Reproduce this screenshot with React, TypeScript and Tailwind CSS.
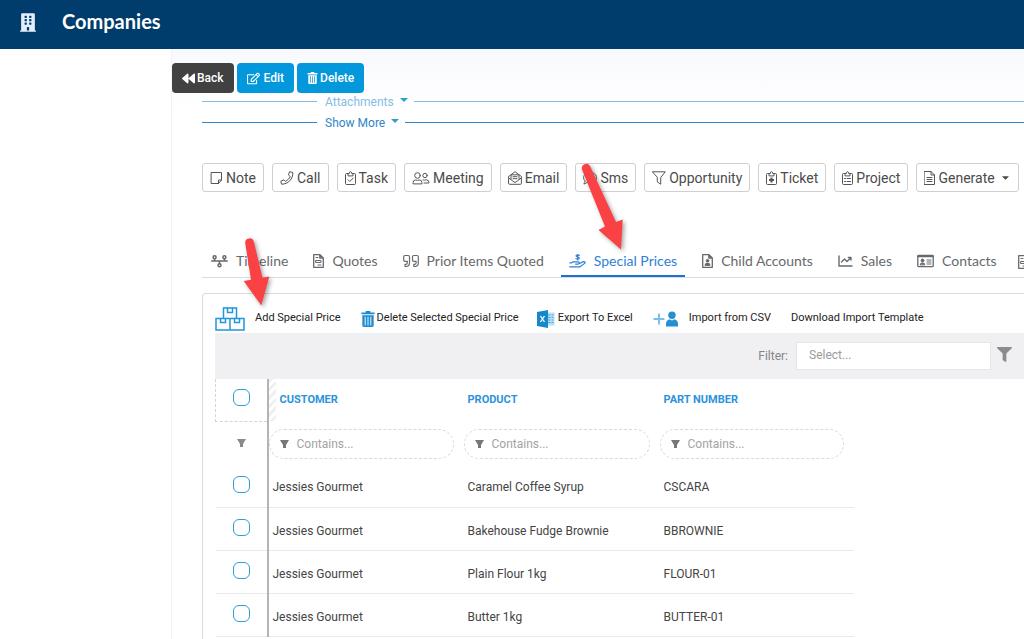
import React from 'react';
import { FaBackward, FaRegEdit, FaBuilding, FaFilter, FaCaretDown } from 'react-icons/fa';

// --- Icons ---

type IconProps = { children: React.ReactNode; className: string; viewBox: string };

const Line = ({ children, className, viewBox }: IconProps) => (
    <svg viewBox={viewBox} className={className} fill="none" stroke="currentColor" strokeWidth="1" strokeLinejoin="round" strokeLinecap="round" aria-hidden="true">
        {children}
    </svg>
);

const NoteIcon = () => (
    <Line viewBox="0 0 13 14" className="w-[13px] h-3.5">
        <path d="M1.5 1.5H11.5V9L8.5 12.5H1.5Z" />
        <path d="M11.5 9H8.5V12.5" />
    </Line>
);

const CallIcon = () => (
    <Line viewBox="0 0 14 14" className="w-3.5 h-3.5">
        <path d="M10 .8L12.8 1.5C13.2 8 8 13.3 1.5 13.2L.8 10.2L4 8.8L5.4 10.4C7.5 9.4 9.3 7.6 10.3 5.5L8.7 4.1Z" />
    </Line>
);

const Clipboard = ({ children }: { children: React.ReactNode }) => (
    <Line viewBox="0 0 11 14" className="w-[11px] h-3.5">
        <path d="M3 2.5H1.5Q.5 2.5 .5 3.5V12.5Q.5 13.5 1.5 13.5H9.5Q10.5 13.5 10.5 12.5V3.5Q10.5 2.5 9.5 2.5H8" />
        <path d="M3 4.5V2.5H4.3Q4.3 .7 5.5 .7T6.7 2.5H8V4.5Z" />
        {children}
    </Line>
);

const TaskIcon = () => (
    <Clipboard>
        <path d="M3 8.7L4.8 10.5L8.2 7" />
    </Clipboard>
);

const TicketIcon = () => (
    <Clipboard>
        <path d="M5.5 6.5V11.5M3 9H8" strokeWidth="2" strokeLinecap="butt" />
    </Clipboard>
);

const ProjectIcon = () => (
    <Clipboard>
        <path d="M2.5 7.5H3.5M5 7.5H8.5M2.5 10.5H3.5M5 10.5H8.5" />
    </Clipboard>
);

const MeetingIcon = () => (
    <Line viewBox="0 0 17 14" className="w-[18px] h-3.5">
        <circle cx="5" cy="4.5" r="2.8" />
        <circle cx="12.5" cy="4.5" r="2.2" />
        <path d="M.6 12.5V11.5Q.6 9 3 9Q5 9.8 7 9Q9.4 9 9.4 11.5V12.5Z" />
        <path d="M10.5 8.9Q12.5 9.5 13.8 8.8Q16.4 8.8 16.4 11.5V12H11.5" />
    </Line>
);

const EmailIcon = () => (
    <Line viewBox="0 0 14 14" className="w-3.5 h-3.5">
        <path d="M.6 5.5L7 .7L13.4 5.5V12.4Q13.4 13.3 12.4 13.3H1.6Q.6 13.3 .6 12.4Z" />
        <path d="M.8 7L6 11Q7 11.6 8 11L13.2 7M3 8.2V3.8H11V8.2M5 5.7H9M5 7.7H9" />
    </Line>
);

const SmsIcon = () => (
    <Line viewBox="0 0 14 14" className="w-3.5 h-3.5">
        <path d="M7 1.2C10.6 1.2 13.4 3.5 13.4 6.7S10.6 12 7 12Q5.4 12 4 11.4Q2.6 12.9 .8 13Q2.1 11.5 2.1 10Q.6 8.6 .6 6.7C.6 3.5 3.4 1.2 7 1.2Z" />
        <path d="M4.3 6.7H4.4M7 6.7H7.1M9.7 6.7H9.8" strokeWidth="1.5" />
    </Line>
);

const FunnelIcon = () => (
    <Line viewBox="0 0 14 14" className="w-3.5 h-3.5">
        <path d="M.7 .8H13.3L8.7 6.6V13.2L5.3 10.8V6.6Z" />
    </Line>
);

const FileIcon = () => (
    <Line viewBox="0 0 11 14" className="w-[11px] h-3.5">
        <path d="M.5 .5H7L10.5 4V13.5H.5ZM7 .5V4H10.5" />
        <path d="M3 6.5H8M3 8.5H8M3 10.5H8" />
    </Line>
);

const TimelineIcon = () => (
    <Line viewBox="0 0 17 14" className="w-[17px] h-3.5">
        <g strokeWidth="1.5">
            <circle cx="3.6" cy="3.2" r="1.5" />
            <circle cx="13.4" cy="3.2" r="1.5" />
            <circle cx="8.5" cy="11.2" r="1.5" />
            <path d="M.7 7H16.3M3.6 4.8V7M13.4 4.8V7M8.5 7V9.4" />
        </g>
    </Line>
);

const QuotesIcon = () => (
    <Line viewBox="0 0 11 14" className="w-[11px] h-3.5">
        <path d="M.7 .7H7L10.3 4V13.3H.7ZM6.8 .7V4H10.3" strokeWidth="1.3" />
        <path d="M3 3.5H5M3 6.5H8V8.5H3ZM5 11H8" />
    </Line>
);

const PriorIcon = () => (
    <Line viewBox="0 0 16 14" className="w-4 h-3.5">
        <g strokeWidth="1.2">
            <path d="M2 1.5H5.2Q6.5 1.5 6.5 2.8V9Q6.5 12.3 3 12.5H2V10.3H3Q4.3 10.2 4.3 8.8V7.3H2Q.7 7.3 .7 6V2.8Q.7 1.5 2 1.5Z" />
            <path d="M10.8 1.5H14Q15.3 1.5 15.3 2.8V9Q15.3 12.3 11.8 12.5H10.8V10.3H11.8Q13.1 10.2 13.1 8.8V7.3H10.8Q9.5 7.3 9.5 6V2.8Q9.5 1.5 10.8 1.5Z" />
        </g>
    </Line>
);

const PricesIcon = () => (
    <Line viewBox="0 0 17 14" className="w-[17px] h-3.5">
        <g strokeWidth="1.2">
            <path d="M10.3 1.4Q9.8 .8 8.6 .9Q7 1 7.1 2Q7.2 2.8 8.7 3Q10.4 3.3 10.3 4.3Q10.2 5.2 8.7 5.2Q7.4 5.2 6.9 4.6M8.7 .3V6" />
            <path d="M.8 8.8H2.6L4 7.8H9Q10.3 7.9 10.2 9Q10 10.1 8.8 10.1H6.6M9.9 9.7L14.5 7.6Q15.8 7.4 16.1 8.6Q16 9.4 11.3 12.5Q10.8 12.9 10 12.9H.8" />
        </g>
    </Line>
);

const ChildIcon = () => (
    <Line viewBox="0 0 11 14" className="w-[11px] h-3.5">
        <path d="M.7 .7H7L10.3 4V13.3H.7ZM6.8 .7V4H10.3" strokeWidth="1.3" />
        <circle cx="5.5" cy="6.7" r="1.3" fill="currentColor" />
        <path d="M3 11Q3 9 5.5 9T8 11Z" fill="currentColor" />
    </Line>
);

const SalesIcon = () => (
    <Line viewBox="0 0 15 14" className="w-[15px] h-3.5">
        <path d="M1 2V12H14" strokeWidth="1.4" />
        <path d="M3.5 8L6.5 5L9 7.5L12.5 4M10.3 3.5H13V6.2" strokeWidth="1.3" />
    </Line>
);

const ContactsIcon = () => (
    <Line viewBox="0 0 17 14" className="w-[17px] h-3.5">
        <rect x=".8" y="1.3" width="15.4" height="11.4" rx="1" strokeWidth="1.3" />
        <path d="M1 2.3H16" strokeWidth="2" />
        <circle cx="5.5" cy="6.5" r="1.4" fill="currentColor" />
        <path d="M3.2 10.5Q3.2 8.9 5.5 8.9T7.8 10.5Z" fill="currentColor" />
        <path d="M10 6H14M10 8H14M10 10H14" />
    </Line>
);

const BoxesIcon = () => (
    <Line viewBox="0 0 30 24" className="w-[30px] h-6 text-[#2196dc]">
        <g strokeWidth="1.5" strokeLinejoin="miter">
            <path d="M8.5 11.5V1H21.5V11.5M1 11.5H29V23H1ZM15 11.5V23" />
            <path d="M12.5 1V5.5H17.5V1M5.5 11.5V15.5H10.5V11.5M19.5 11.5V15.5H24.5V11.5" />
        </g>
    </Line>
);

const TrashIcon = ({ className }: { className: string }) => (
    <svg viewBox="0 0 14 17" className={className} fill="currentColor" aria-hidden="true">
        <path d="M4.5 0H9.5V1.5H14V3.5H0V1.5H4.5Z" />
        <path fillRule="evenodd" d="M1 4.5H13V15.5Q13 17 11.5 17H2.5Q1 17 1 15.5ZM3.5 6V15.5H4.5V6ZM6.5 6V15.5H7.5V6ZM9.5 6V15.5H10.5V6Z" />
    </svg>
);

const ExcelIcon = () => (
    <svg viewBox="0 0 18 18" className="w-[18px] h-[18px]" aria-hidden="true">
        <path d="M10 2.5H17.5V15.5H10Z" fill="#b8dff5" />
        <path d="M11 5H13.5M14.5 5H16.5M11 7.5H13.5M14.5 7.5H16.5M11 10H13.5M14.5 10H16.5M11 12.5H13.5M14.5 12.5H16.5" stroke="#4fabdf" strokeWidth="1.2" />
        <path d="M0 2L11 0V18L0 16Z" fill="#1787cb" />
        <path d="M3.5 6L7.5 12M7.5 6L3.5 12" stroke="#fff" strokeWidth="1.3" />
    </svg>
);

const ImportIcon = () => (
    <svg viewBox="0 0 26 16" className="w-[26px] h-4" aria-hidden="true">
        <path d="M6 2.5V13.5M.5 8H11.5" stroke="#7cbfe8" strokeWidth="2" />
        <circle cx="19" cy="4.2" r="3.7" fill="#2490d0" />
        <path d="M13 15.5V13Q13 9.2 16.5 8.3L19 9.5L21.5 8.3Q25 9.2 25 13V15.5Z" fill="#2490d0" />
    </svg>
);

const Wedge = ({ className }: { className: string }) => (
    <svg viewBox="0 0 9 8" className={className} fill="currentColor" aria-hidden="true">
        <path d="M0 0H9L6 5V8H3V5Z" />
    </svg>
);

// --- Data ---

const actions = [
    { label: 'Note', icon: <NoteIcon /> },
    { label: 'Call', icon: <CallIcon /> },
    { label: 'Task', icon: <TaskIcon /> },
    { label: 'Meeting', icon: <MeetingIcon /> },
    { label: 'Email', icon: <EmailIcon /> },
    { label: 'Sms', icon: <SmsIcon /> },
    { label: 'Opportunity', icon: <FunnelIcon /> },
    { label: 'Ticket', icon: <TicketIcon /> },
    { label: 'Project', icon: <ProjectIcon /> },
    { label: 'Generate', icon: <FileIcon />, menu: true },
];

const tabs = [
    { label: 'Timeline', icon: <TimelineIcon /> },
    { label: 'Quotes', icon: <QuotesIcon /> },
    { label: 'Prior Items Quoted', icon: <PriorIcon /> },
    { label: 'Special Prices', icon: <PricesIcon />, active: true },
    { label: 'Child Accounts', icon: <ChildIcon /> },
    { label: 'Sales', icon: <SalesIcon /> },
    { label: 'Contacts', icon: <ContactsIcon /> },
];

const columns = ['Customer', 'Product', 'Part Number'];

const rows = [
    ['Jessies Gourmet', 'Caramel Coffee Syrup', 'CSCARA'],
    ['Jessies Gourmet', 'Bakehouse Fudge Brownie', 'BBROWNIE'],
    ['Jessies Gourmet', 'Plain Flour 1kg', 'FLOUR-01'],
    ['Jessies Gourmet', 'Butter 1kg', 'BUTTER-01'],
];

// --- Sections ---

const Divider = ({ label, className }: { label: string; className: string }) => (
    <div className={`flex items-center h-[21px] text-xs ${className}`}>
        <span className="w-[115px] h-px bg-current" />
        <button type="button" className="flex items-start gap-1.5 pl-2 pr-1.5 pt-px">
            {label}
            <svg viewBox="0 0 8 4" className="w-2 h-1 mt-1 text-[#2f9fd0]" fill="currentColor" aria-hidden="true">
                <path d="M0 0H8L4 4Z" />
            </svg>
        </button>
        <span className="flex-1 h-px bg-current" />
    </div>
);

const Check = ({ label }: { label: string }) => (
    <input type="checkbox" aria-label={label} className="appearance-none block mx-auto w-[17px] h-[17px] rounded-md border border-[#2d9fd6] bg-white" />
);

const PriceTable = () => (
    <table className="w-[639px] table-fixed border-collapse text-left text-xs text-[#444]">
        <colgroup>
            <col className="w-[52px]" />
            <col className="w-[196px]" />
            <col className="w-[196px]" />
            <col />
        </colgroup>
        <thead>
            <tr className="h-[42px]">
                <th className="border-l border-b border-dashed border-[#d4d4d4] border-r-2 border-r-[#b4b4b4] [border-right-style:solid] pb-1">
                    <Check label="Select all" />
                </th>
                {columns.map((c, i) => (
                    <th key={c} className={i === 0 ? 'p-0' : 'pl-1'}>
                        <div className="flex items-center h-[42px] text-[11px]">
                            {i === 0 && <span className="w-[7px] h-full mr-1 bg-[repeating-linear-gradient(135deg,#f0f0f0_0_3px,#fff_3px_6px)]" />}
                            <span className="uppercase font-bold text-[#2b93dd]">{c}</span>
                        </div>
                    </th>
                ))}
            </tr>
            <tr className="h-[43px]">
                <td className="border-r-2 border-[#b4b4b4]">
                    <Wedge className="w-[9px] h-2 mx-auto text-[#8a8a8a]" />
                </td>
                {columns.map((c) => (
                    <td key={c} className="pt-0.5">
                        <label className="flex items-center gap-2 h-[30px] pl-2.5 mr-2.5 rounded-full border border-dashed border-[#d9d9d9]">
                            <Wedge className="w-[9px] h-2 shrink-0 text-[#777]" />
                            <input type="text" aria-label={`Filter ${c}`} placeholder="Contains..." className="w-full min-w-0 text-xs outline-none bg-transparent placeholder:text-[#a3a3a3]" />
                        </label>
                    </td>
                ))}
            </tr>
        </thead>
        <tbody>
            {rows.map((row) => (
                <tr key={row[1]} className="h-[43px] border-b border-[#e9e9e9]">
                    <td className="border-r-2 border-r-[#b4b4b4] pb-0.5">
                        <Check label={`Select ${row[1]}`} />
                    </td>
                    {row.map((cell, i) => (
                        <td key={i} className="pl-1 pt-1">{cell}</td>
                    ))}
                </tr>
            ))}
        </tbody>
    </table>
);

const Arrows = () => (
    <svg width="460" height="160" viewBox="200 155 460 160" className="absolute left-[200px] top-[155px] pointer-events-none drop-shadow-[2px_2px_2px_rgba(0,0,0,0.35)]" fill="#fa4144" aria-hidden="true">
        <path d="M245.2 243A4.4 4.4 0 0 1 253.8 241.5L262.5 277.8L269.3 276.6L261.3 305.5L243.7 281L251 279.8Z" />
        <path d="M582 169.5A4.4 4.4 0 0 1 590 166L616 222L622.7 219.5L621 249.5L598.5 230L605 226.5Z" />
    </svg>
);

export default function App() {
    return (
        <div className="relative flex flex-col min-h-screen overflow-hidden bg-white font-[Roboto,sans-serif]">
            <header className="flex items-center h-[49px] pl-5 pb-1 gap-[26px] bg-[#003c6c] text-white">
                <FaBuilding className="w-4 h-[19px] text-[#e4eefa]" />
                <h1 className="pb-1 font-[Lato,sans-serif] text-xl font-bold">Companies</h1>
            </header>

            <main className="flex flex-col flex-1 ml-[171px] border-l border-[#f1f3f9] bg-linear-to-b from-[#f8f9fe] to-white to-10%">
                <div className="flex gap-[3px] pt-3.5 text-xs font-medium text-white">
                    <button type="button" className="flex items-center gap-0.5 h-[30px] px-2.5 rounded bg-[#414141]">
                        <FaBackward size={13} /> Back
                    </button>
                    <button type="button" className="flex items-center gap-1 h-[30px] px-2.5 rounded bg-[#0397dc]">
                        <FaRegEdit size={13} /> Edit
                    </button>
                    <button type="button" className="flex items-center gap-0.5 h-[30px] px-2.5 rounded bg-[#0397dc]">
                        <TrashIcon className="w-[11px] h-3" /> Delete
                    </button>
                </div>

                <div className="flex flex-col flex-1 pl-[30px]">
                    <Divider label="Attachments" className="-mt-0.5 text-[#86bde4]" />
                    <Divider label="Show More" className="text-[#2f86c9]" />

                    <div className="flex gap-2 mt-[30px] text-sm text-[#4b4b4b]">
                        {actions.map((a) => (
                            <button key={a.label} type="button" className="flex items-center gap-[3px] h-[29px] px-[7px] shrink-0 rounded-[3px] border border-[#cfcfd2] bg-white">
                                <span className="text-[#555]">{a.icon}</span>
                                {a.label}
                                {a.menu && <FaCaretDown size={11} className="ml-0.5" />}
                            </button>
                        ))}
                    </div>

                    <nav className="flex gap-[9px] pl-px mt-[54px] border-b border-[#d5dde0] font-[Lato,sans-serif] text-sm text-[#66696c]">
                        {tabs.map((t) => (
                            <a
                                key={t.label}
                                href="#"
                                className={
                                    t.active
                                        ? 'flex items-center gap-2 h-[31px] px-2 shrink-0 border-b-2 border-[#1f71cf] text-[#2f7fd6]'
                                        : 'flex items-center gap-2 h-[31px] px-2 shrink-0 border-b-2 border-transparent'
                                }
                            >
                                {t.icon}
                                <span>{t.label}</span>
                            </a>
                        ))}
                        <a href="#" aria-label="More" className="flex items-center pl-1 shrink-0">
                            <QuotesIcon />
                        </a>
                    </nav>

                    <section className="flex-1 mt-[15px] pl-3 border-l border-t border-[#d5dde0] rounded-tl">
                        <div className="flex items-center h-[39px] pt-2.5 text-[11px] text-[#222]">
                            <button type="button" className="flex items-center gap-2.5">
                                <BoxesIcon /> Add Special Price
                            </button>
                            <button type="button" className="flex items-center gap-0.5 ml-5">
                                <TrashIcon className="w-3.5 h-4 text-[#1c8ad0]" /> Delete Selected Special Price
                            </button>
                            <button type="button" className="flex items-center gap-[3px] ml-[18px]">
                                <ExcelIcon /> Export To Excel
                            </button>
                            <button type="button" className="flex items-center gap-2.5 ml-5">
                                <ImportIcon /> Import from CSV
                            </button>
                            <button type="button" className="ml-5">Download Import Template</button>
                        </div>

                        <div className="flex items-center justify-end h-[46px] pr-3 bg-[#f0f0f2]">
                            <label htmlFor="filter" className="mr-2 text-xs text-[#85858a]">Filter:</label>
                            <input id="filter" type="text" placeholder="Select..." className="w-[195px] h-7 px-3 pb-0.5 border border-[#e6e6e8] bg-white text-xs outline-none placeholder:text-[#9a9a9a]" />
                            <button type="button" aria-label="Apply filter" className="ml-1.5 mb-1">
                                <FaFilter size={15} className="text-[#8b8b8b]" />
                            </button>
                        </div>

                        <PriceTable />
                    </section>
                </div>
            </main>
            <Arrows />
        </div>
    );
}
